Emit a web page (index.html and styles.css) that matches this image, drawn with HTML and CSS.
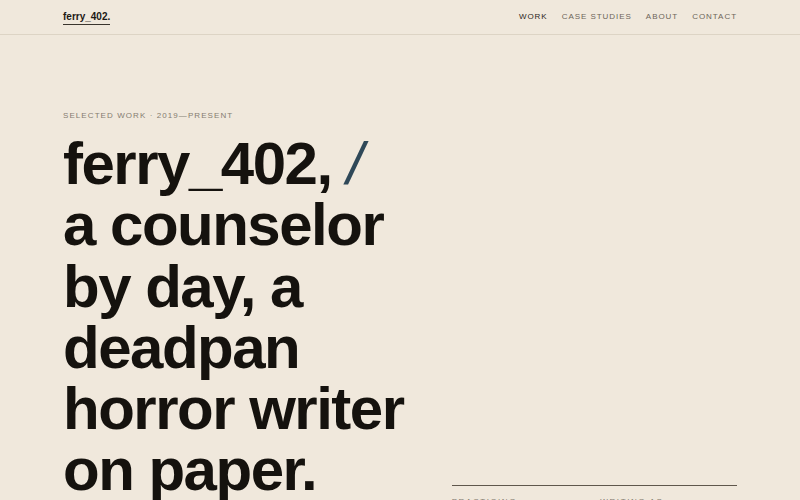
FILE: index.html
```html
<!DOCTYPE html>
<html lang="en">
<head>
<meta charset="utf-8">
<title>ferry_402.</title>
<link rel="stylesheet" href="styles.css">
</head>
<body>
<header class="site-header">
  <div class="container header-inner">
    <a class="logo" href="#">ferry_402.</a>
    <nav class="nav">
      <a class="nav-link is-active" href="#">WORK</a>
      <a class="nav-link" href="#">CASE STUDIES</a>
      <a class="nav-link" href="#">ABOUT</a>
      <a class="nav-link" href="#">CONTACT</a>
    </nav>
  </div>
</header>
<main class="container hero">
  <div class="hero-main">
    <p class="eyebrow">SELECTED WORK · 2019—PRESENT</p>
    <h1 class="headline">ferry_402, <span class="slash">/</span><br>a counselor<br>by day, a<br>deadpan<br>horror writer<br>on paper.</h1>
  </div>
  <aside class="hero-side">
    <div class="stat">
      <span class="stat-label">PRACTICING</span>
      <span class="stat-value">Counseling</span>
    </div>
    <div class="stat">
      <span class="stat-label">WRITING AS</span>
      <span class="stat-value">ferry_402</span>
    </div>
  </aside>
</main>
</body>
</html>
```

FILE: styles.css
```css
* { box-sizing: border-box; }
html, body { margin: 0; padding: 0; }
body {
  background: #f0e8dc;
  color: #15120e;
  font-family: "Liberation Sans", Arial, sans-serif;
}
.container {
  width: 674px;
  margin: 0 auto;
}
.site-header {
  border-bottom: 1px solid #ddd4c5;
}
.header-inner {
  height: 34px;
  display: flex;
  align-items: center;
  justify-content: space-between;
}
.logo {
  font-size: 10px;
  font-weight: 700;
  color: #1c1915;
  text-decoration: none;
  border-bottom: 1px solid #3a352e;
  padding-bottom: 2px;
  margin-top: 2px;
}
.nav {
  display: flex;
  gap: 14px;
  margin-bottom: 2px;
}
.nav-link {
  font-size: 8px;
  letter-spacing: 0.12em;
  color: #6d655a;
  text-decoration: none;
}
.nav-link.is-active { color: #2b2620; }
.hero {
  display: grid;
  grid-template-columns: 5fr 4fr;
  column-gap: 32px;
  padding-top: 76px;
}
.eyebrow {
  margin: 0 0 13px;
  font-size: 8px;
  letter-spacing: 0.135em;
  color: #857c70;
}
.headline {
  margin: 0 0 27px;
  font-size: 60px;
  line-height: 61.3px;
  letter-spacing: -0.025em;
  font-weight: 700;
  color: #15120e;
  white-space: nowrap;
}
.slash {
  color: #2f4858;
  font-weight: 400;
  font-style: italic;
}
.hero-side {
  align-self: end;
  border-top: 1px solid #5f574c;
  display: grid;
  grid-template-columns: 1fr 1fr;
  column-gap: 12px;
  padding-top: 11px;
}
.stat {
  display: flex;
  flex-direction: column;
  gap: 6px;
}
.stat-label {
  font-size: 8px;
  letter-spacing: 0.2em;
  color: #857c70;
}
.stat-value {
  font-size: 14px;
  line-height: 16px;
  color: #15120e;
}
```
